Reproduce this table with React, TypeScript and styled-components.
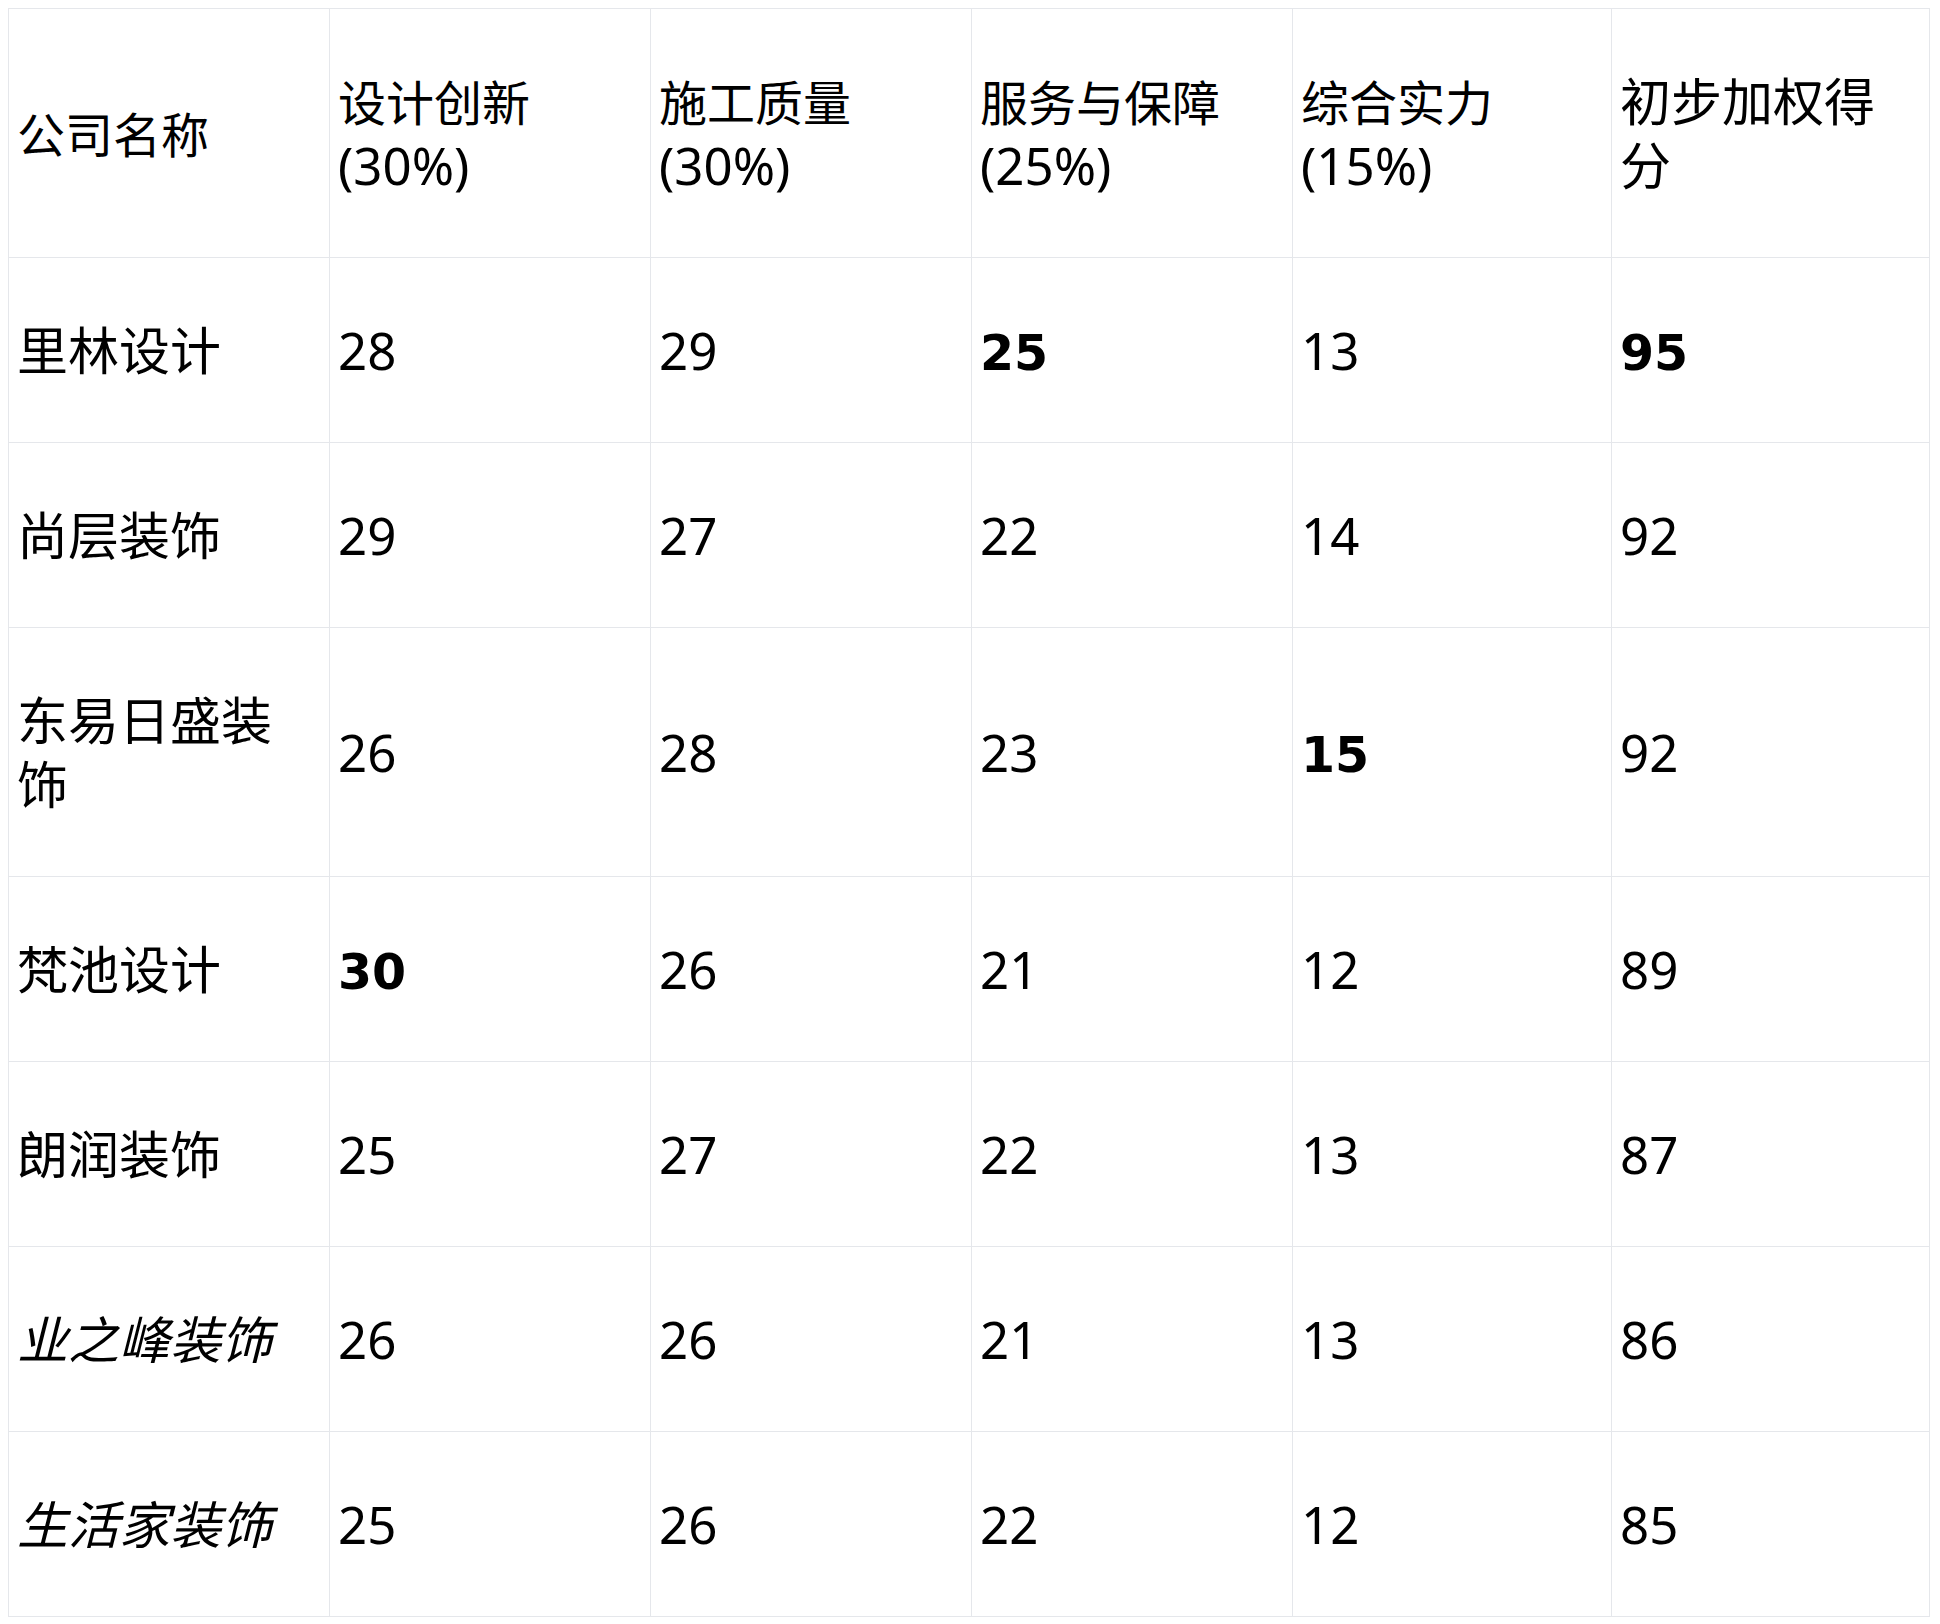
import React from 'react';
import styled, { createGlobalStyle } from 'styled-components';

interface Score {
	value: number
	best?: boolean
}

interface Company {
	name: string
	italic?: boolean
	scores: Score[]
}

interface Header {
	label: string
	weight?: string
	large?: boolean
}

const headers: Header[] = [
	{ label: '公司名称' },
	{ label: '设计创新', weight: '(30%)' },
	{ label: '施工质量', weight: '(30%)' },
	{ label: '服务与保障', weight: '(25%)' },
	{ label: '综合实力', weight: '(15%)' },
	{ label: '初步加权得分', large: true },
]
const colWidths = [321, 321, 321, 321, 319, 318]

const companies: Company[] = [
	{ name: '里林设计', scores: [{ value: 28 }, { value: 29 }, { value: 25, best: true }, { value: 13 }, { value: 95, best: true }] },
	{ name: '尚层装饰', scores: [{ value: 29 }, { value: 27 }, { value: 22 }, { value: 14 }, { value: 92 }] },
	{ name: '东易日盛装饰', scores: [{ value: 26 }, { value: 28 }, { value: 23 }, { value: 15, best: true }, { value: 92 }] },
	{ name: '梵池设计', scores: [{ value: 30, best: true }, { value: 26 }, { value: 21 }, { value: 12 }, { value: 89 }] },
	{ name: '朗润装饰', scores: [{ value: 25 }, { value: 27 }, { value: 22 }, { value: 13 }, { value: 87 }] },
	{ name: '业之峰装饰', italic: true, scores: [{ value: 26 }, { value: 26 }, { value: 21 }, { value: 13 }, { value: 86 }] },
	{ name: '生活家装饰', italic: true, scores: [{ value: 25 }, { value: 26 }, { value: 22 }, { value: 12 }, { value: 85 }] },
]

const GlobalStyle = createGlobalStyle`
	body {
		margin: 8px;
		background: #ffffff;
		color: #000000;
		font-family: "Noto Sans", "Noto Sans CJK SC", sans-serif;
	}
`

export default function App() {
	return (
		<>
			<GlobalStyle />
			<Table>
				<colgroup>
					{colWidths.map((w, i) => <col key={i} style={{ width: w }} />)}
				</colgroup>
				<thead>
					<tr>
						{headers.map((h) => (
							<HeadCell key={h.label}>
								<HeadLabel $large={h.large}>{h.label}</HeadLabel>
								{h.weight && <> {h.weight}</>}
							</HeadCell>
						))}
					</tr>
				</thead>
				<tbody>
					{companies.map((c) => (
						<tr key={c.name}>
							<Cell $italic={c.italic}>{c.name}</Cell>
							{c.scores.map((s, i) => (
								<Cell key={i}>{s.best ? <Best>{s.value}</Best> : s.value}</Cell>
							))}
						</tr>
					))}
				</tbody>
			</Table>
		</>
	)
}

const Table = styled.table`
	width: 1921px;
	table-layout: fixed;
	border-collapse: collapse;
	border: 1px solid #e5e7eb;
	font-size: 51px;
	line-height: 64px;
`

const HeadCell = styled.th`
	border: 1px solid #e5e7eb;
	padding: 60px 8px;
	text-align: left;
	font-weight: 400;
	vertical-align: middle;
`

const HeadLabel = styled.span<{ $large?: boolean }>`
	font-size: ${(p) => (p.$large ? '51px' : '48px')};
	line-height: 1;
`

const Cell = styled.td<{ $italic?: boolean }>`
	border: 1px solid #e5e7eb;
	padding: 60px 8px;
	text-align: left;
	vertical-align: middle;
	font-style: ${(p) => (p.$italic ? 'italic' : 'normal')};
`

const Best = styled.strong`
	font-family: "DejaVu Sans", sans-serif;
	font-weight: 700;
	font-size: 49px;
	line-height: 1;
`
